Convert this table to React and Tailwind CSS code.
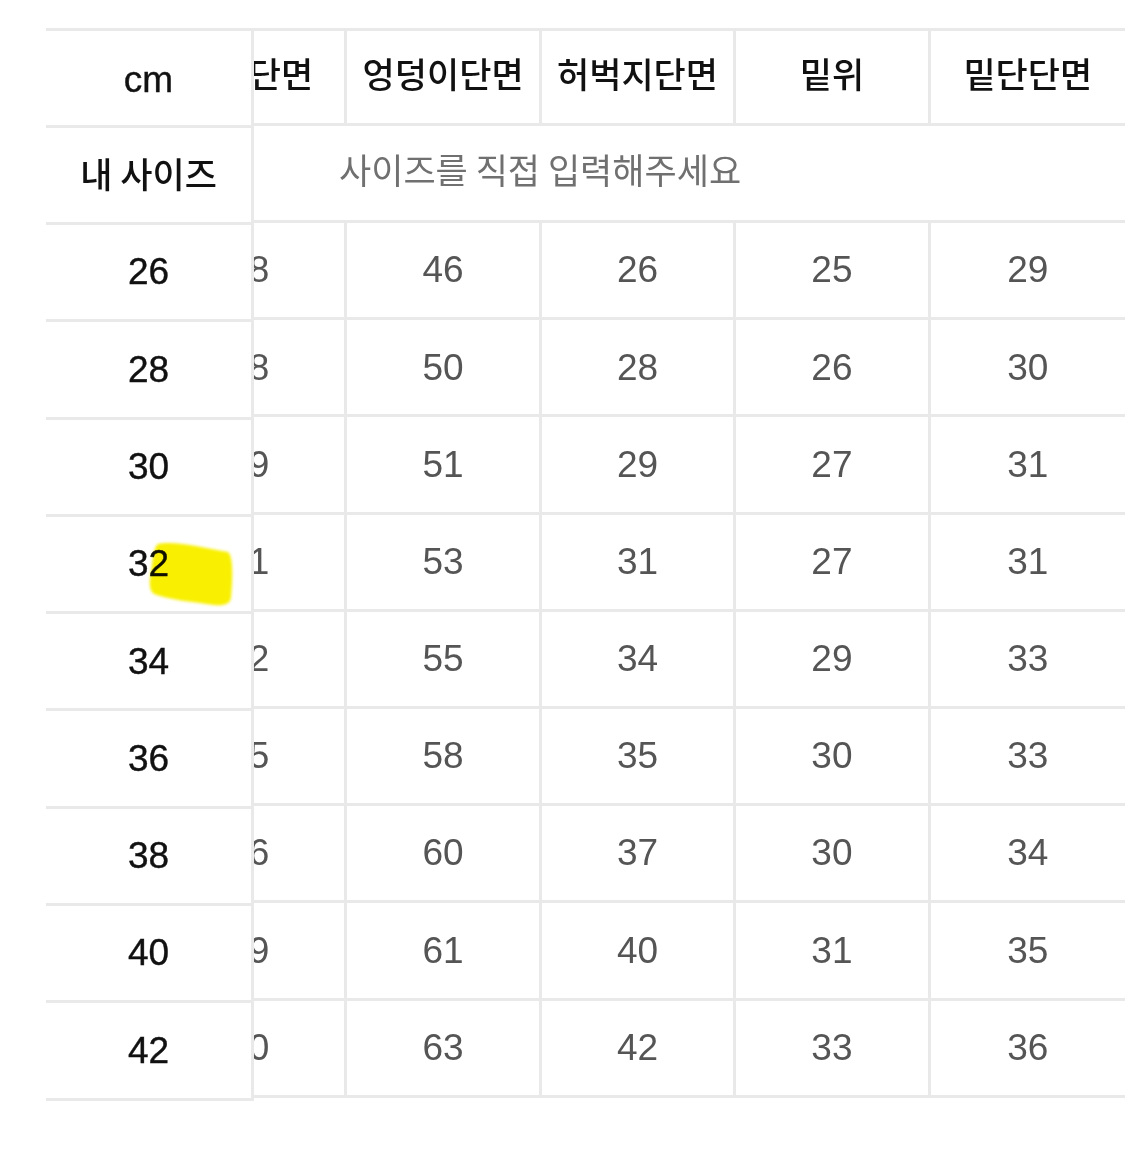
import React from "react";

const KR = { fontFamily: '"Noto Sans CJK KR", "Noto Sans", sans-serif' };
const LAT = { fontFamily: '"Liberation Sans", Arial, "Noto Sans CJK KR", sans-serif' };

const sizes = ["26", "28", "30", "32", "34", "36", "38", "40", "42"];
const headers = ["허리단면", "엉덩이단면", "허벅지단면", "밑위", "밑단단면"];
const data = [
  ["38", "46", "26", "25", "29"],
  ["38", "50", "28", "26", "30"],
  ["39", "51", "29", "27", "31"],
  ["41", "53", "31", "27", "31"],
  ["42", "55", "34", "29", "33"],
  ["45", "58", "35", "30", "33"],
  ["46", "60", "37", "30", "34"],
  ["49", "61", "40", "31", "35"],
  ["50", "63", "42", "33", "36"],
];

export default function App() {
  return (
    <div className="relative w-[1125px] h-[1163px] bg-white overflow-hidden pt-[28px] pl-[46px]">
      <div className="flex">
        {/* fixed left column */}
        <div className="w-[208px] shrink-0 border-t-[3px] border-r-[3px] border-[#e9e9e9]">
          <div
            className="h-[97px] flex items-center justify-center border-b-[3px] border-[#e9e9e9] text-[37px] text-[#111] pt-[4px] [-webkit-text-stroke:0.4px_#111]"
            style={LAT}
          >
            cm
          </div>
          <div
            className="h-[97px] flex items-center justify-center border-b-[3px] border-[#e9e9e9] text-[35px] text-[#111] font-medium pb-[4px]"
            style={KR}
          >
            내 사이즈
          </div>
          {sizes.map((s) => (
            <div
              key={s}
              className="h-[97.3px] flex items-center justify-center border-b-[3px] border-[#e9e9e9] text-[37px] text-[#111] [-webkit-text-stroke:0.4px_#111]"
              style={LAT}
            >
              {s}
            </div>
          ))}
        </div>

        {/* scrolled right table */}
        <div className="flex-1 overflow-hidden border-t-[3px] border-[#e9e9e9]">
          <div className="ml-[-101px] w-[972px]">
            <div className="h-[95px] grid grid-cols-5 border-b-[3px] border-[#e9e9e9]">
              {headers.map((h, j) => (
                <div
                  key={h}
                  className={
                    (j < 4 ? "border-r-[3px] " : "") +
                    "flex items-center justify-center border-[#e9e9e9] text-[35px] text-[#111] font-medium pb-[8px]"
                  }
                  style={KR}
                >
                  {h}
                </div>
              ))}
            </div>
            <div
              className="h-[97px] flex items-center border-b-[3px] border-[#e9e9e9] pl-[186px] text-[35px] text-[#707070] pb-[8px]"
              style={KR}
            >
              사이즈를 직접 입력해주세요
            </div>
            {data.map((row, i) => (
              <div
                key={i}
                className="h-[97.2px] grid grid-cols-5 border-b-[3px] border-[#e9e9e9]"
              >
                {row.map((v, j) => (
                  <div
                    key={j}
                    className={
                      (j < 4 ? "border-r-[3px] " : "") +
                      "flex items-center justify-center border-[#e9e9e9] text-[37px] text-[#555]"
                    }
                    style={LAT}
                  >
                    {v}
                  </div>
                ))}
              </div>
            ))}
          </div>
        </div>
      </div>

      {/* yellow highlighter mark */}
      <svg
        className="absolute left-[144px] top-[536px] mix-blend-multiply pointer-events-none"
        width="96"
        height="80"
        viewBox="0 0 96 80"
      >
        <defs>
          <filter id="hl" x="-20%" y="-20%" width="140%" height="140%">
            <feGaussianBlur stdDeviation="1.8" />
          </filter>
        </defs>
        <path
          d="M14 8 C 30 4, 60 12, 84 16 C 89 20, 89 40, 87 62 C 86 68, 80 70, 70 69 C 50 66, 25 64, 10 58 C 5 55, 5 45, 7 36 C 9 24, 9 12, 14 8 Z"
          fill="#f8f000"
          filter="url(#hl)"
        />
      </svg>
    </div>
  );
}
